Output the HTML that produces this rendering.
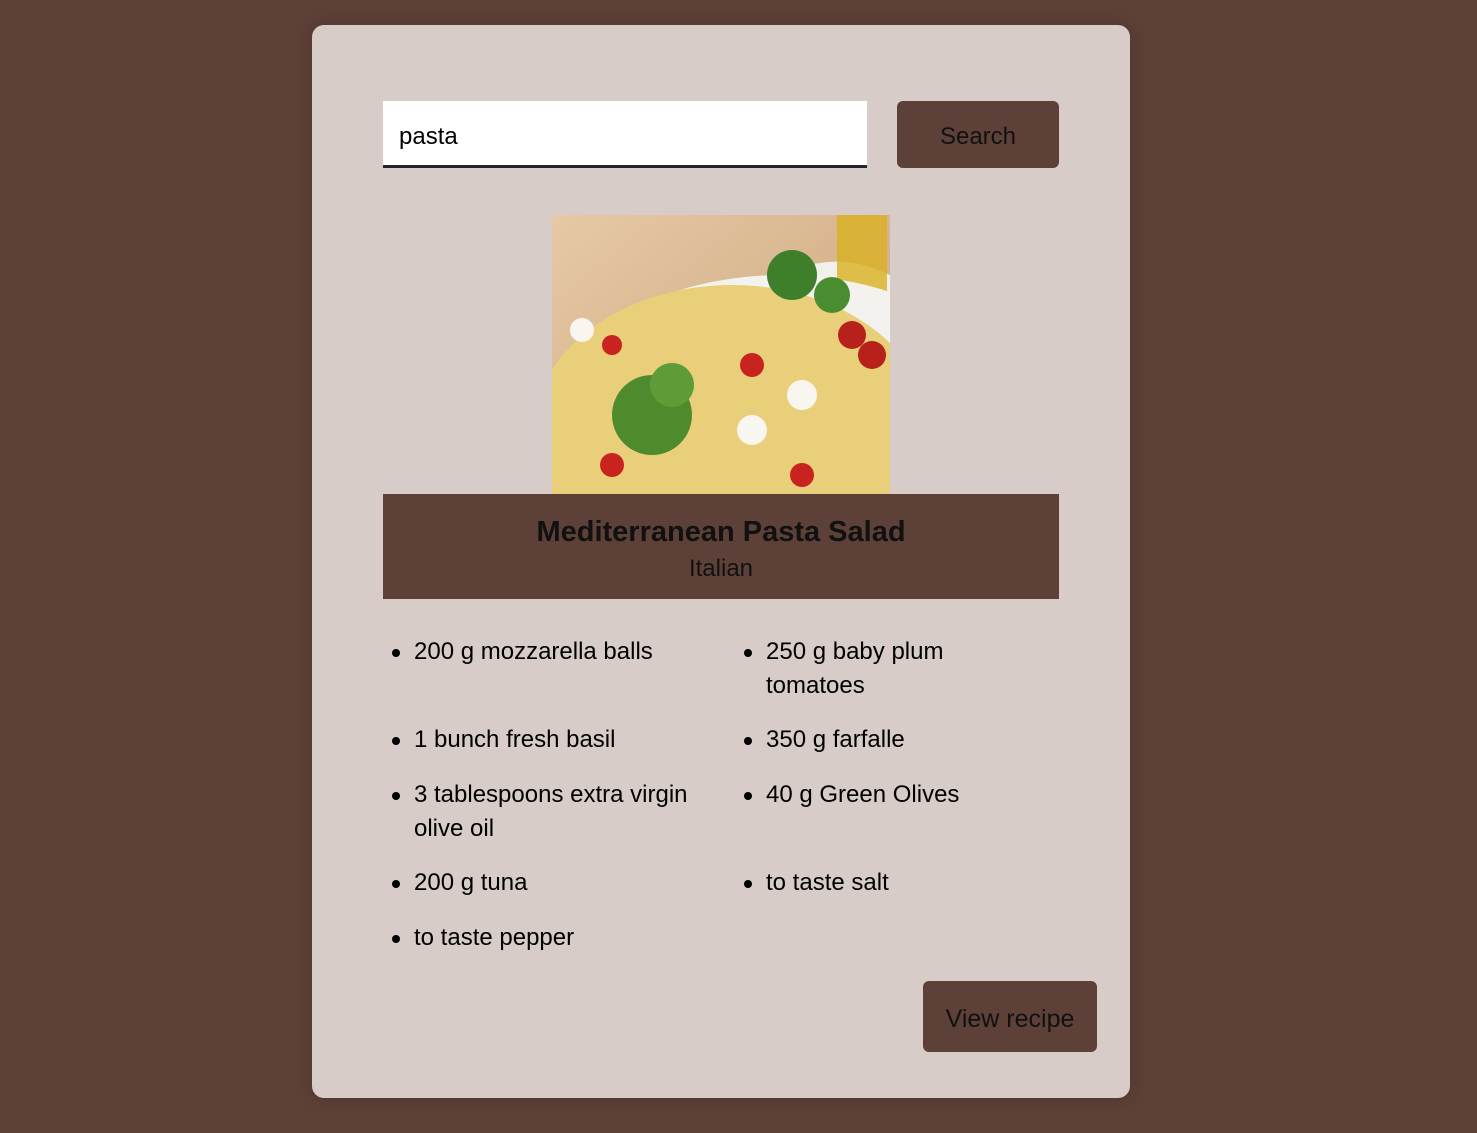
<!DOCTYPE html>
<html><head><style>
body{margin:0;width:1477px;height:1133px;background:#5d4037;font-family:"Liberation Sans",sans-serif;position:relative;overflow:hidden}
.card{position:absolute;left:312px;top:25px;width:818px;height:1073px;background:#d7ccc8;border-radius:12px;box-shadow:0 0 20px rgba(0,0,0,.15)}
.abs{position:absolute}
.inp{left:383px;top:101px;width:484px;height:64px;background:#fff;border-bottom:3px solid #23232e}
.inp span{position:absolute;left:16px;top:22px;font-size:24px;color:#000}
.btn{background:#5d4037;border-radius:6px;color:#111;text-align:center}
.band{left:383px;top:494px;width:676px;height:105px;background:#5d4037;text-align:center}
.li{font-size:24px;color:#000;line-height:34px;width:300px}
.li:before{content:"";position:absolute;left:-22px;top:14px;width:8px;height:8px;border-radius:50%;background:#000}
</style></head><body>
<div class="card"></div>
<div class="abs inp"><span>pasta</span></div>
<div class="abs btn" style="left:897px;top:101px;width:162px;height:67px;line-height:72px;font-size:24px">Search</div>
<svg class="abs" style="left:552px;top:215px" width="338" height="279" viewBox="0 0 338 279">
<defs><linearGradient id="g" x1="0" y1="0" x2="1" y2="1"><stop offset="0" stop-color="#e6c9a4"/><stop offset="1" stop-color="#c9a27a"/></linearGradient></defs>
<rect width="338" height="279" fill="url(#g)"/>
<path d="M170 100 Q260 20 338 60 L338 230 Q290 120 170 100Z" fill="#f2f0ea"/>
<rect x="285" y="0" width="50" height="110" fill="#d8b020" opacity=".8"/>
<ellipse cx="230" cy="220" rx="240" ry="160" fill="#f4f2ee"/>
<ellipse cx="180" cy="220" rx="200" ry="150" fill="#e9cf7a"/>
<circle cx="100" cy="200" r="40" fill="#4f8a2c"/><circle cx="120" cy="170" r="22" fill="#5f9c38"/>
<circle cx="60" cy="130" r="10" fill="#c8231e"/><circle cx="200" cy="150" r="12" fill="#c8231e"/><circle cx="250" cy="260" r="12" fill="#c8231e"/><circle cx="60" cy="250" r="12" fill="#c8231e"/>
<circle cx="300" cy="120" r="14" fill="#b8201c"/><circle cx="320" cy="140" r="14" fill="#b8201c"/>
<circle cx="250" cy="180" r="15" fill="#f8f6ef"/><circle cx="200" cy="215" r="15" fill="#f8f6ef"/><circle cx="30" cy="115" r="12" fill="#f8f6ef"/>
<circle cx="240" cy="60" r="25" fill="#3d7f2a"/><circle cx="280" cy="80" r="18" fill="#4a8d30"/>
</svg>
<div class="abs band"><div style="font-size:29px;font-weight:bold;margin-top:22px;color:#111">Mediterranean Pasta Salad</div><div style="font-size:24px;margin-top:6px;color:#111">Italian</div></div>
<div class="abs li" style="left:414px;top:635px">200 g mozzarella balls</div>
<div class="abs li" style="left:766px;top:635px;width:210px">250 g baby plum tomatoes</div>
<div class="abs li" style="left:414px;top:723px">1 bunch fresh basil</div>
<div class="abs li" style="left:766px;top:723px">350 g farfalle</div>
<div class="abs li" style="left:414px;top:778px">3 tablespoons extra virgin olive oil</div>
<div class="abs li" style="left:766px;top:778px">40 g Green Olives</div>
<div class="abs li" style="left:414px;top:866px">200 g tuna</div>
<div class="abs li" style="left:766px;top:866px">to taste salt</div>
<div class="abs li" style="left:414px;top:921px">to taste pepper</div>
<div class="abs btn" style="left:923px;top:981px;width:174px;height:71px;line-height:76px;font-size:25px">View recipe</div>
</body></html>
